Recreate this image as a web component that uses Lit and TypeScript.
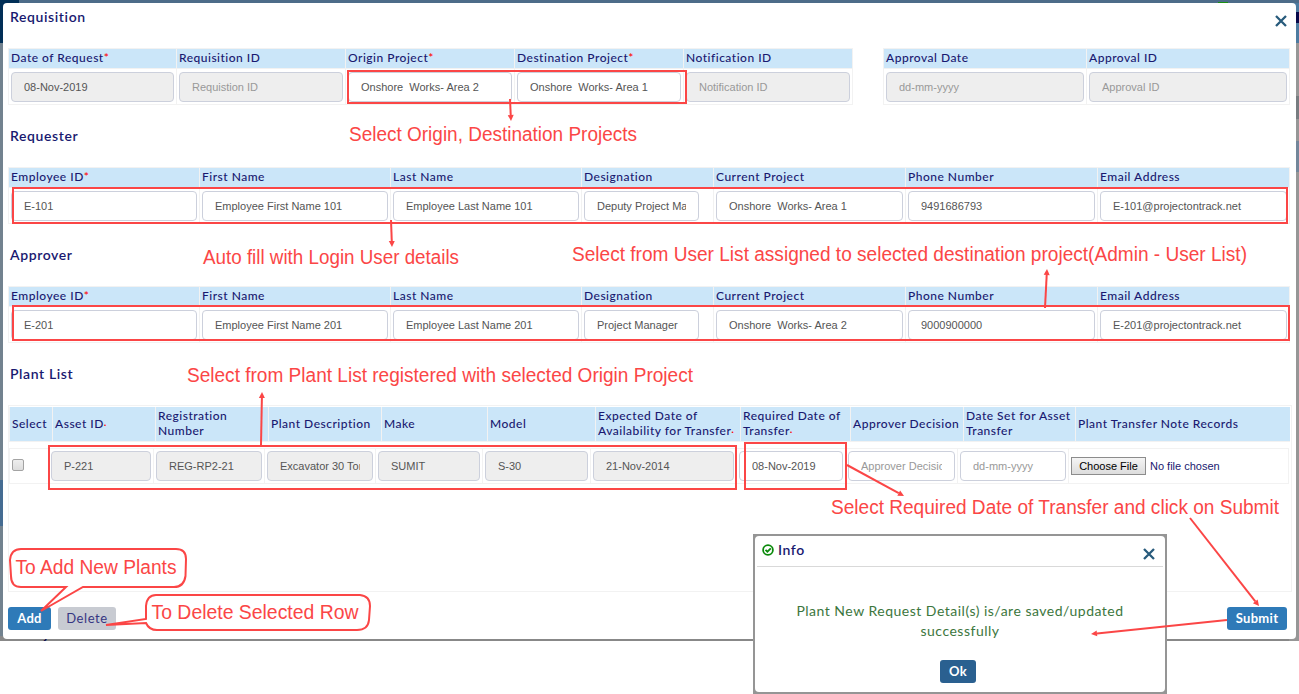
import { LitElement, html, svg, css, nothing } from "lit";
import { customElement } from "lit/decorators.js";

interface Field {
  label: string;
  value?: string;
  hint?: string;
  required?: boolean;
  locked?: boolean;
  narrow?: boolean;
}

interface Note {
  text: string;
  x: number;
  y: number;
  width: number;
}

const request: Field[] = [
  { label: "Date of Request", value: "08-Nov-2019", required: true, locked: true },
  { label: "Requisition ID", hint: "Requistion ID", locked: true },
  { label: "Origin Project", value: "Onshore  Works- Area 2", required: true },
  { label: "Destination Project", value: "Onshore  Works- Area 1", required: true },
  { label: "Notification ID", hint: "Notification ID", locked: true },
];

const approval: Field[] = [
  { label: "Approval Date", hint: "dd-mm-yyyy", locked: true },
  { label: "Approval ID", hint: "Approval ID", locked: true },
];

const person = (n: string, role: string, area: string, phone: string): Field[] => [
  { label: "Employee ID", value: `E-${n}`, required: true },
  { label: "First Name", value: `Employee First Name ${n}` },
  { label: "Last Name", value: `Employee Last Name ${n}` },
  { label: "Designation", value: role, narrow: true },
  { label: "Current Project", value: `Onshore  Works- Area ${area}` },
  { label: "Phone Number", value: phone },
  { label: "Email Address", value: `E-${n}@projectontrack.net` },
];

const plants: Field[] = [
  { label: "Asset ID", value: "P-221", required: true, locked: true },
  { label: "Registration Number", value: "REG-RP2-21", locked: true },
  { label: "Plant Description", value: "Excavator 30 Tonnes", locked: true },
  { label: "Make", value: "SUMIT", locked: true },
  { label: "Model", value: "S-30", locked: true },
  { label: "Expected Date of Availability for Transfer", value: "21-Nov-2014", required: true, locked: true },
  { label: "Required Date of Transfer", value: "08-Nov-2019", required: true },
  { label: "Approver Decision", hint: "Approver Decision" },
  { label: "Date Set for Asset Transfer", hint: "dd-mm-yyyy" },
];

const notes: Note[] = [
  { text: "Select Origin, Destination Projects", x: 349, y: 141, width: 288 },
  { text: "Auto fill with Login User details", x: 203, y: 264, width: 256 },
  { text: "Select from User List assigned to selected destination project(Admin - User List)", x: 572, y: 261, width: 675 },
  { text: "Select from Plant List registered with selected Origin Project", x: 187, y: 382, width: 506 },
  { text: "Select Required Date of Transfer and click on Submit", x: 831, y: 514, width: 448 },
  { text: "To Add New Plants", x: 15.5, y: 574, width: 161 },
  { text: "To Delete Selected Row", x: 151.5, y: 619, width: 207 },
];

const frames = [
  [348, 71, 338, 32],
  [13, 188, 1274, 35],
  [13, 306, 1276, 34],
  [49, 446, 687, 43],
  [745, 443, 101, 46],
];

const arrows = [
  [510, 99, 511, 121],
  [391, 220, 392, 247],
  [1045, 308, 1047, 269],
  [261, 445, 262, 392],
  [847, 465, 904, 496],
  [1190, 518, 1259, 606],
  [1227, 620, 1091, 634],
];

@customElement("field-box")
export class FieldBox extends LitElement {
  static properties = { field: { attribute: false } };
  declare field: Field;

  static styles = css`
    :host { display: block; min-width: 0; }
    input {
      display: block;
      box-sizing: border-box;
      width: 100%;
      height: 30px;
      margin: 0;
      padding: 0 12px;
      border: 1px solid #ccd0dc;
      border-radius: 4px;
      background: #fff;
      color: #555;
      font: 11px "Liberation Sans", Arial, sans-serif;
      outline: none;
    }
    input::placeholder { color: #999; opacity: 1; }
    .locked { background: #eee; }
    .narrow { width: 115px; }
  `;

  render() {
    const f = this.field;
    return html`<input
      class="${f.locked ? "locked" : ""} ${f.narrow ? "narrow" : ""}"
      .value=${f.value ?? ""}
      placeholder=${f.hint ?? ""}
      aria-label=${f.label}
      ?readonly=${f.locked}
    />`;
  }
}

@customElement("field-grid")
export class FieldGrid extends LitElement {
  static properties = { fields: { attribute: false }, layout: {} };
  declare fields: Field[];
  declare layout: string;

  static styles = css`
    :host { display: block; }
    .grid {
      display: grid;
      grid-template-rows: 19px 35px;
      gap: 1px;
      padding: 1px;
      background: #f2f2f2;
    }
    .request { grid-template-columns: 167px repeat(4, 168px); }
    .approval { grid-template-columns: 202px 202px; }
    .person { grid-template-columns: 190px 190px 190px 131px 191px 191px 191px; }
    .head {
      padding-left: 2px;
      background: #cbe6f9;
      color: #191970;
      font: 500 12px/18px Lato, sans-serif;
      letter-spacing: 0.5px;
      white-space: nowrap;
    }
    .star { color: #f00; }
    .cell { padding: 3px 2px 2px; background: #fff; }
  `;

  render() {
    return html`<div class="grid ${this.layout}">
      ${this.fields.map((f) => html`<div class="head">${f.label}${f.required ? html`<span class="star">*</span>` : nothing}</div>`)}
      ${this.fields.map((f) => html`<div class="cell"><field-box .field=${f}></field-box></div>`)}
    </div>`;
  }
}

@customElement("plant-table")
export class PlantTable extends LitElement {
  static styles = css`
    :host {
      display: block;
      box-sizing: border-box;
      height: 187px;
      padding: 1px 1px 0 0;
      border: 1px solid #f2f2f2;
      font-family: Lato, sans-serif;
    }
    .heads {
      display: grid;
      grid-template-columns: 42px 102px 112px 112px 105px 107px 144px 109px 112px 111px 1fr;
      gap: 1px;
      height: 34px;
      padding: 0 0 1px 1px;
      background: #f2f2f2;
    }
    .head {
      display: flex;
      align-items: center;
      padding: 0 0 2px 2px;
      background: #cbe6f9;
      color: #191970;
      font-size: 12px;
      font-weight: 500;
      line-height: 15px;
      letter-spacing: 0.5px;
      white-space: pre-line;
    }
    .dot { color: #f00; font-size: 10px; line-height: 0; letter-spacing: 0; }
    .row {
      display: grid;
      grid-template-columns: 38px 104px 110px 110px 106px 107px 145px 108px 111px 110px 1fr;
      gap: 1px;
      margin: 6px 1px 0 0;
      padding: 1px;
      background: #f2f2f2;
    }
    .cell { height: 30px; padding: 2px 2px 2px; background: #fff; }
    .check { padding: 10px 2px; height: 14px; }
    .box {
      display: block;
      box-sizing: border-box;
      width: 12px;
      height: 12px;
      border: 1px solid #a3a3a3;
      border-radius: 2px;
      background: linear-gradient(#eee, #ddd);
    }
    .file { display: flex; align-items: center; gap: 4px; color: #191970; font: 11px "Liberation Sans", Arial, sans-serif; }
    .choose {
      box-sizing: border-box;
      width: 75px;
      height: 18px;
      padding: 0;
      border: 1px solid #8c8c8c;
      border-radius: 0;
      background: linear-gradient(#f4f4f4, #dcdcdc);
      color: #000;
      font: 11px "Liberation Sans", Arial, sans-serif;
    }
  `;

  render() {
    return html`
      <div class="heads">
        <div class="head">Select</div>
        ${plants.map((f) => html`<div class="head"><span>${f.label}${f.required ? html`<span class="dot">·</span>` : nothing}</span></div>`)}
        <div class="head">Plant Transfer Note Records</div>
      </div>
      <div class="row">
        <div class="cell check"><span class="box" role="checkbox" aria-checked="false"></span></div>
        ${plants.map((f) => html`<div class="cell"><field-box .field=${f}></field-box></div>`)}
        <div class="cell file"><button class="choose">Choose File</button><span>No file chosen</span></div>
      </div>
    `;
  }
}

@customElement("app-root")
export class AppRoot extends LitElement {
  static styles = css`
    :host {
      display: block;
      position: relative;
      width: 1299px;
      height: 694px;
      overflow: hidden;
      background: #fff;
      color: #191970;
      font-family: Lato, sans-serif;
    }
    .page {
      position: relative;
      box-sizing: border-box;
      height: 641px;
      padding: 3px 3px 2px;
      overflow: hidden;
      background:
        linear-gradient(#1a8f12, #1a8f12) 1218px 2px / 10px 1px no-repeat,
        linear-gradient(#012f57, #012f57) 0 0 / 19px 3px no-repeat,
        linear-gradient(#4d6c89, #4d6c89) 0 0 / 100% 3px no-repeat,
        linear-gradient(#012f57 43px, #72828f 43px 480px, #456c92 480px 526px, #72828f 526px) 0 0 / 10px 636px no-repeat,
        linear-gradient(#4d7ba0 12px, #08084a 12px 23px, #4d7ba0 23px 43px, #969696 43px 96px, #777c80 96px 119px, #969696 119px 141px, #73869a 141px 172px, #969696 172px) 100% 0 / 10px 100% no-repeat,
        #888;
    }
    .modal {
      position: relative;
      box-sizing: border-box;
      height: 636px;
      padding: 5px 6px 0 5px;
      border-radius: 4px;
      background: #fff;
    }
    .title { display: flex; justify-content: space-between; height: 40px; }
    h2 {
      margin: 0;
      padding-left: 2px;
      font-size: 14px;
      font-weight: 600;
      line-height: 18px;
      letter-spacing: 0.6px;
    }
    .close { width: 12px; height: 12px; margin: 7px 3px 0 0; stroke: #285b7c; stroke-width: 2.3; fill: none; }
    .top { display: flex; justify-content: space-between; width: 1282px; }
    .section { height: 40px; padding-top: 22px; }
    .section + * { width: 1282px; }
    .section + plant-table { width: 1284px; }
    .last { height: 40px; }
    .foot { display: flex; align-items: center; gap: 7px; padding: 15px 3px 0 0; }
    .btn {
      box-sizing: border-box;
      height: 23px;
      padding: 0;
      border: 0;
      border-radius: 3px;
      background: #2e7ab8;
      color: #fff;
      font: bold 13px/23px Lato, sans-serif;
      letter-spacing: 0.3px;
      text-align: center;
    }
    .add { width: 43px; }
    .delete { width: 58px; background: #c8cbd2; color: #363682; font-weight: normal; letter-spacing: 0.6px; }
    .submit { width: 60px; margin-left: auto; }
    .credit {
      position: absolute;
      left: 24px;
      top: 629px;
      color: #333;
      font-size: 12px;
      line-height: 12px;
      letter-spacing: 0.55px;
      white-space: nowrap;
    }
    .credit b { color: #08084a; }

    .info {
      position: absolute;
      left: 753px;
      top: 534px;
      box-sizing: border-box;
      width: 414px;
      height: 160px;
      padding: 2px;
      background: #959595;
    }
    .panel {
      display: flex;
      flex-direction: column;
      height: 156px;
      padding: 0 2px;
      border-radius: 4px;
      background: #fff;
    }
    .bar {
      display: flex;
      align-items: flex-start;
      height: 30px;
      padding: 0 7px 0 5px;
      border-bottom: 1px solid #d9d9d9;
    }
    .ok-mark { width: 12px; height: 12px; margin-top: 8px; stroke: #0b8a0b; fill: none; stroke-width: 1.8; }
    .bar h2 { padding-left: 4px; line-height: 28px; }
    .bar .close { margin: 12px 1px 0 auto; }
    .message {
      height: 40px;
      margin-top: 34px;
      color: #3c763d;
      font-size: 14px;
      line-height: 20px;
      letter-spacing: 0.5px;
      text-align: center;
    }
    .ok { width: 36px; margin: 19px 0 0 183px; background: #2a6090; }
    .notes { position: absolute; left: 0; top: 0; width: 1299px; height: 694px; pointer-events: none; }
    .line { fill: none; stroke: #fb4646; stroke-width: 2; }
    .bubble { fill: #fff; stroke: #fb4646; stroke-width: 2; }
    .tip { fill: #fb4646; }
    .note { fill: #fb4646; font: 20px "Liberation Sans", Arial, sans-serif; }
  `;

  private cross() {
    return html`<svg class="close" viewBox="0 0 12 12"><path d="M1 1L11 11M11 1L1 11" /></svg>`;
  }

  private arrow([x1, y1, x2, y2]: number[]) {
    const len = Math.hypot(x2 - x1, y2 - y1);
    const ux = (x2 - x1) / len;
    const uy = (y2 - y1) / len;
    const bx = x2 - ux * 6;
    const by = y2 - uy * 6;
    return svg`
      <path class="line" d="M${x1} ${y1}L${bx} ${by}" />
      <path class="tip" d="M${x2} ${y2}L${bx - uy * 3} ${by + ux * 3}L${bx + uy * 3} ${by - ux * 3}Z" />`;
  }

  render() {
    return html`
      <div class="page">
        <div class="credit"><b>Project On</b>Track © 2017 Kala Tech Pvt. Ltd.</div>
        <div class="modal">
          <div class="title"><h2>Requisition</h2>${this.cross()}</div>
          <div class="top">
            <field-grid layout="request" .fields=${request}></field-grid>
            <field-grid layout="approval" .fields=${approval}></field-grid>
          </div>
          <div class="section"><h2>Requester</h2></div>
          <field-grid layout="person" .fields=${person("101", "Deputy Project Manager", "1", "9491686793")}></field-grid>
          <div class="section"><h2>Approver</h2></div>
          <field-grid layout="person" .fields=${person("201", "Project Manager", "2", "9000900000")}></field-grid>
          <div class="section last"><h2>Plant List</h2></div>
          <plant-table></plant-table>
          <div class="foot">
            <button class="btn add">Add</button>
            <button class="btn delete">Delete</button>
            <button class="btn submit">Submit</button>
          </div>
        </div>
      </div>
      <div class="info">
        <div class="panel">
          <div class="bar">
            <svg class="ok-mark" viewBox="0 0 12 12"><circle cx="6" cy="6" r="4.9" /><path d="M3.5 5.8L5.4 7.7L8.8 4.3" /></svg>
            <h2>Info</h2>
            ${this.cross()}
          </div>
          <div class="message">Plant New Request Detail(s) is/are saved/updated<br />successfully</div>
          <button class="btn ok">Ok</button>
        </div>
      </div>
      <svg class="notes" viewBox="0 0 1299 694">
        ${frames.map(([x, y, w, h]) => svg`<rect class="line" x=${x} y=${y} width=${w} height=${h} />`)}
        <path class="bubble" d="M21 549H176Q186 549 186 559L185.500 576Q184 587 174 587H83L41 611L66 587H21Q11 587 11 576L10 560Q11 549 21 549Z" />
        <path class="bubble" d="M156 595H360Q370 596 370 606L369 620Q368 630 357 630H157Q149 630 146 623L106 625L146 619V606Q147 595 156 595Z" />
        ${arrows.map((a) => this.arrow(a))}
        ${notes.map((n) => svg`<text class="note" x=${n.x} y=${n.y} textLength=${n.width} lengthAdjust="spacingAndGlyphs">${n.text}</text>`)}
      </svg>
    `;
  }
}
